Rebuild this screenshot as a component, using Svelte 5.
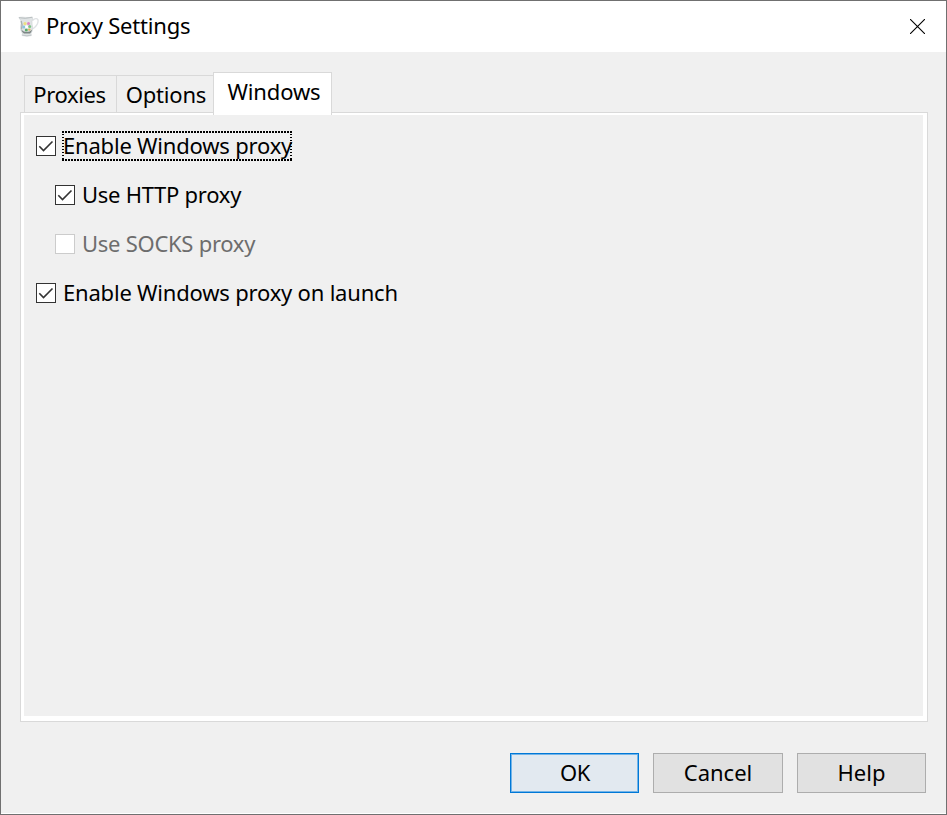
<script lang="ts">
  const tabs = ["Proxies", "Options", "Windows"];
  let active = $state("Windows");

  let options = $state([
    { id: "enable", label: "Enable Windows proxy", checked: true, disabled: false, indent: false, focused: true },
    { id: "http", label: "Use HTTP proxy", checked: true, disabled: false, indent: true, focused: false },
    { id: "socks", label: "Use SOCKS proxy", checked: false, disabled: true, indent: true, focused: false },
    { id: "launch", label: "Enable Windows proxy on launch", checked: true, disabled: false, indent: false, focused: false },
  ]);
</script>

<div class="window" role="dialog" aria-label="Proxy Settings">
  <header class="titlebar">
    <svg class="app-icon" width="22" height="22" viewBox="0 0 22 22" aria-hidden="true">
      <path d="M14.500 4.500C17 1.500 20.800 2.200 20 6C19.300 9.500 17 11.500 14.500 13" fill="none" stroke="#dfe2e4" stroke-width="1.300" />
      <path d="M.8 1.500Q4 .9 7.500 1.400Q11 1.800 14.500 1Q14.800 3 14 5.500Q13.800 8 14.600 11Q14.800 15 13 17.500L13.500 19.500Q9 21 4 19.500L4.500 17.500Q2.300 14.500 2.500 11Q3.600 7 2.800 4.500Z" fill="#e0e4e5" stroke="#cdd2d3" stroke-width=".6" />
      <path d="M1 1.700Q7 3.200 14 1.300" fill="none" stroke="#b0b6b8" stroke-width=".8" />
      <path d="M3.200 5Q4.800 9 3.500 13" fill="none" stroke="#a9b1b3" stroke-width="1.400" />
      <path d="M3 13Q4 16.500 6 17.500H12Q13.500 16 14.200 13.500Q12 16 8.500 16T3 13Z" fill="#7d8685" />
      <path d="M4.500 19.200Q9 20.300 13 19.200" fill="none" stroke="#c2c8ca" />
      <circle cx="7" cy="7.600" r="1.600" fill="#ecdf80" />
      <circle cx="10.500" cy="7.400" r="1.500" fill="#de86c4" />
      <circle cx="11.700" cy="10.500" r="1.500" fill="#7cc583" />
      <circle cx="5.800" cy="11" r="1.500" fill="#8ac5df" />
      <circle cx="8.300" cy="14" r="1.500" fill="#5ba96b" />
      <circle cx="11.300" cy="13.600" r="1.200" fill="#e2b35c" />
      <circle cx="8.600" cy="10.800" r="1.500" fill="#fff" />
    </svg>
    <h1>Proxy Settings</h1>
    <button class="close" aria-label="Close">
      <svg width="15" height="15" viewBox="0 0 15 15" aria-hidden="true">
        <path d="M0 0L15 15M15 0L0 15" stroke="#000" stroke-width="1.100" />
      </svg>
    </button>
  </header>

  <div class="tabs" role="tablist">
    {#each tabs as tab}
      <button class="tab {tab.toLowerCase()}" class:active={tab === active} role="tab" aria-selected={tab === active} onclick={() => (active = tab)}>
        {tab}
      </button>
    {/each}
  </div>

  <main class="panel">
    <div class="page">
      {#each options as option (option.id)}
        <label class="option" class:indent={option.indent} class:disabled={option.disabled}>
          <input type="checkbox" bind:checked={option.checked} disabled={option.disabled} />
          <span class="box">
            {#if option.checked}
              <svg width="18" height="18" viewBox="0 0 18 18" aria-hidden="true">
                <path d="M2.300 9.300L6.500 13.500L15.500 4.500" fill="none" stroke="#333" stroke-width="1.600" />
              </svg>
            {/if}
          </span>
          <span class="label" class:focused={option.focused}>{option.label}</span>
        </label>
      {/each}
    </div>
  </main>

  <footer class="actions">
    <button class="push default">OK</button>
    <button class="push cancel">Cancel</button>
    <button class="push">Help</button>
  </footer>
</div>

<style>
  :global(body) {
    margin: 0;
  }

  .window {
    width: 947px;
    height: 815px;
    box-sizing: border-box;
    display: flex;
    flex-direction: column;
    border: 1px solid #707070;
    background: #f0f0f0;
    box-shadow: inset 0 -1px #fff;
    color: #000;
    font-family: "Noto Sans", "Open Sans", sans-serif;
    font-size: 22px;
    letter-spacing: -0.2px;
    line-height: 30px;
    overflow: hidden;
  }

  button {
    padding: 0;
    border: 0;
    background: none;
    color: inherit;
    font: inherit;
    letter-spacing: inherit;
    white-space: nowrap;
  }

  .titlebar {
    display: flex;
    align-items: center;
    height: 51px;
    padding: 0 21px 0 17px;
    background: #fff;
  }

  .app-icon {
    flex: none;
  }

  h1 {
    flex: 1;
    margin: 0 0 0 6px;
    padding-bottom: 3px;
    font-size: 22px;
    font-weight: 400;
  }

  .close {
    display: grid;
  }

  .tabs {
    display: flex;
    align-items: flex-end;
    height: 43px;
    margin: 20px 0 -3px 23px;
    position: relative;
    z-index: 1;
  }

  .tab {
    box-sizing: border-box;
    height: 37px;
    margin-bottom: 3px;
    border: 1px solid #d9d9d9;
    border-width: 1px 0 0 1px;
  }

  .tab.proxies {
    width: 92px;
    padding-right: 2px;
    letter-spacing: -0.4px;
  }

  .tab.options {
    width: 97px;
    padding-left: 2px;
  }

  .tab.windows {
    width: 119px;
    padding-left: 3px;
    letter-spacing: -0.15px;
  }

  .tab.active {
    height: 43px;
    margin-bottom: 0;
    padding-bottom: 6px;
    border-width: 1px 1px 0;
    background: #fff;
  }

  .panel {
    flex: 1;
    margin: 0 18px 0 19px;
    padding: 2px 4px 5px 3px;
    border: 1px solid #d9d9d9;
    background: #fff;
  }

  .page {
    box-sizing: border-box;
    height: 100%;
    padding: 16px 12px;
    display: flex;
    flex-direction: column;
    gap: 19px;
    background: #f0f0f0;
  }

  .option {
    display: flex;
    align-items: center;
    align-self: flex-start;
    height: 30px;
    gap: 6px;
  }

  .option.indent {
    margin-left: 19px;
    letter-spacing: -0.27px;
  }

  .option input {
    position: absolute;
    opacity: 0;
  }

  .box {
    box-sizing: border-box;
    width: 20px;
    height: 20px;
    border: 1px solid #333;
    background: #fff;
  }

  .box svg {
    display: block;
  }

  .label {
    box-sizing: border-box;
    height: 30px;
    padding: 0 1px;
    line-height: 28px;
    white-space: nowrap;
  }

  .focused {
    --dots: #000 0 2px, transparent 2px 3px;
    --thin-dots: #000 0 1px, transparent 1px 3px;
    width: 230px;
    background:
      repeating-linear-gradient(90deg, var(--dots)) 0 0 / 100% 2px no-repeat,
      repeating-linear-gradient(90deg, var(--dots)) 0 100% / 100% 2px no-repeat,
      repeating-linear-gradient(var(--thin-dots)) 0 0 / 2px 100% no-repeat,
      repeating-linear-gradient(var(--thin-dots)) 100% 0 / 2px 100% no-repeat;
  }

  .disabled {
    color: #6d6d6d;
  }

  .disabled .box {
    border-color: #ccc;
  }

  .actions {
    display: flex;
    justify-content: flex-end;
    gap: 14px;
    padding: 31px 20px 21px 0;
  }

  .push {
    box-sizing: border-box;
    width: 129px;
    height: 40px;
    padding-bottom: 2px;
    border: 1px solid #adadad;
    background: #e1e1e1;
    letter-spacing: 0;
  }

  .push.cancel {
    width: 130px;
  }

  .push.default {
    padding-left: 1px;
    border-color: #0078d7;
    background: #e2e9f0;
    box-shadow: inset 0 0 0 1px #73b4e8;
    letter-spacing: -0.5px;
  }
</style>
